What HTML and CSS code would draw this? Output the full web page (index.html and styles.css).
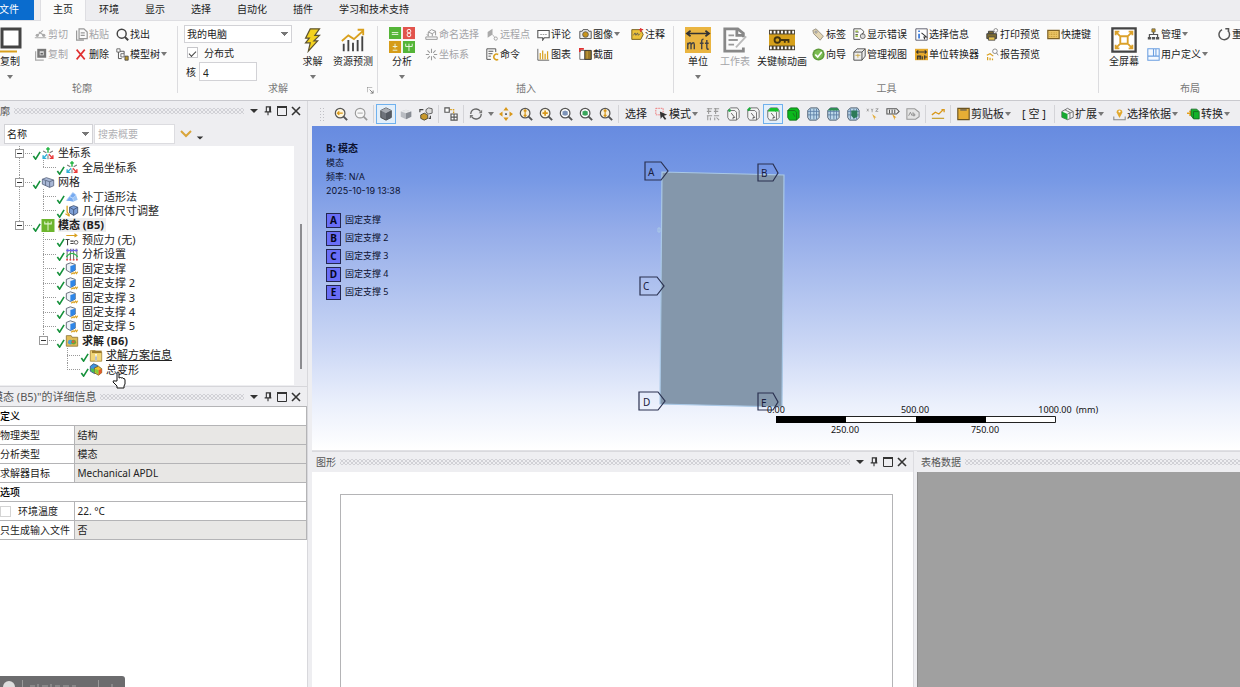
FILE: index.html
```html
<!DOCTYPE html>
<html lang="zh-CN">
<head>
<meta charset="utf-8">
<title>Mechanical</title>
<link rel="stylesheet" href="styles.css">
</head>
<body>
<svg class="sprite" aria-hidden="true">
  <symbol id="caret" viewBox="0 0 6 4"><path d="M0 0h6L3 4z" fill="#777"/></symbol>
  <symbol id="cut" viewBox="0 0 16 16"><path d="M1 12h14M4 9l7-6M6 5l6 4" stroke="#aaa" stroke-width="1.4" fill="none"/><circle cx="4" cy="9" r="2" fill="#aaa"/><circle cx="12" cy="9" r="2" fill="#aaa"/></symbol>
  <symbol id="paste" viewBox="0 0 16 16"><path d="M2 3v12h9M5 1h6l4 4v8H5zM7 6h5M7 9h5" stroke="#999" stroke-width="1.5" fill="none"/></symbol>
  <symbol id="find" viewBox="0 0 16 16"><circle cx="7" cy="7" r="5.500" stroke="#444" stroke-width="1.8" fill="none"/><path d="M11 11l4 4" stroke="#444" stroke-width="2.4"/></symbol>
  <symbol id="dup" viewBox="0 0 16 16"><path d="M2 4v11h10" stroke="#aaa" stroke-width="1.5" fill="none"/><path d="M4 1h11v11H4z" fill="#777"/><path d="M7 4h5v5H7z" fill="#ddd"/><path d="M8 6h3v2H8z" fill="#666"/></symbol>
  <symbol id="del" viewBox="0 0 16 16"><path d="M2 2l10 12M12 2L2 14" stroke="#e03131" stroke-width="2" fill="none"/></symbol>
  <symbol id="mtree" viewBox="0 0 16 16"><path d="M3 5v8h4M3 4h7v3" stroke="#555" stroke-width="1.2" fill="none"/><path d="M1 1h4v4H1zM6 7h4v4H6z" fill="#fff" stroke="#555"/><path d="M11 10h4v5h-4z" fill="#b8962e" stroke="#444"/></symbol>
  <symbol id="bigcopy" viewBox="0 0 22 26"><path d="M2 2h18v18H2z" fill="#fff" stroke="#444" stroke-width="3"/><path d="M0 24.500h17" stroke="#d9a01e" stroke-width="2"/></symbol>
  <symbol id="bolt" viewBox="0 0 20 28"><path d="M7 2h10l-5 7h5l-6 6h4L5 26l2-9H2l4-5H2z" fill="#f4d21f" stroke="#5c5330" stroke-width="1.300"/></symbol>
  <symbol id="forecast" viewBox="0 0 28 28"><path d="M4 26V18M9 26V14M14 26v-9M19 26V14M24 26V10" stroke="#444" stroke-width="2"/><path d="M2 15l7-6 6 4L25 4M19 3h6v6" stroke="#d9a01e" stroke-width="2" fill="none"/></symbol>
  <symbol id="analysis" viewBox="0 0 28 28"><path d="M0 0h13v13H0zM15 15h13v13H15z" fill="#55b538"/><path d="M15 0h13v13H15z" fill="#e2544d"/><path d="M0 15h13v13H0z" fill="#d69c19"/><path d="M3 6h7M3 8h7M4 21h5M6.500 18v5M4 25h5M18 18v3h7v-3M21.500 18v8" stroke="#eef8e6" fill="none"/><circle cx="21.500" cy="4.500" r="2" fill="none" stroke="#fff"/><circle cx="21.500" cy="8.500" r="2" fill="none" stroke="#fff"/></symbol>
  <symbol id="named" viewBox="0 0 16 16"><path d="M1 11h14v3H1zM4 9V5l4-3 5 2v5M4 5l5 2v3M9 7l4-3M2 8l3 2" stroke="#999" stroke-width="1.200" fill="none"/></symbol>
  <symbol id="remote" viewBox="0 0 16 16"><path d="M2 5l6-4v7l-6 4z" fill="#aaa"/><path d="M8 8l3 4" stroke="#aaa"/><circle cx="12" cy="13" r="2" fill="none" stroke="#999"/></symbol>
  <symbol id="csysg" viewBox="0 0 16 16"><path d="M8 1v5M8 10v5M1 8h4M11 8h4M3 3l3 3M13 3l-3 3M3 13l3-3M13 13l-3-3" stroke="#999" stroke-width="1.300"/></symbol>
  <symbol id="cmd" viewBox="0 0 16 16"><path d="M12 5V1H1v13h5M3 4h6M3 7h5M3 10h3" stroke="#555" stroke-width="1.200" fill="none"/><path d="M15 8a3.500 3.500 0 1 0 0 6" stroke="#d9a01e" stroke-width="2" fill="none"/></symbol>
  <symbol id="comment" viewBox="0 0 16 16"><path d="M1 3h14v9H9l-2 3v-3H1z" fill="#fff" stroke="#555" stroke-width="1.300"/><path d="M4 8h8" stroke="#888" stroke-dasharray="2 1"/></symbol>
  <symbol id="chart" viewBox="0 0 16 16"><path d="M1 1v14h14" stroke="#666" stroke-width="1.200" fill="none"/><path d="M4 14V6M7 14V3M10 14V7M13 14V4" stroke="#d9a01e" stroke-width="1.500"/></symbol>
  <symbol id="camera" viewBox="0 0 16 16"><path d="M1 4h3l1-2h6l1 2h3v9H1z" fill="#eee" stroke="#555" stroke-width="1.200"/><circle cx="8" cy="8" r="3.500" fill="#c8941c" stroke="#555"/></symbol>
  <symbol id="section" viewBox="0 0 16 16"><path d="M1 3h14v11H1z" fill="#fff" stroke="#555"/><path d="M7 3h8v11H7z" fill="#9a7826" stroke="#333"/><path d="M10 4v9" stroke="#d9b04c"/><path d="M1 5V1h5" stroke="#e03131" stroke-width="2" fill="none"/></symbol>
  <symbol id="note" viewBox="0 0 16 16"><path d="M1 2h11l3 6-3 6H1z" fill="#ecc23a" stroke="#7a6420" stroke-width="1.200"/><path d="M3 9l2-3 1 3 2-3 1 3 2-2" stroke="#555" fill="none"/><path d="M12 0v5M10 2h5" stroke="#e03131" stroke-width="1.500"/></symbol>
  <symbol id="units" viewBox="0 0 28 28"><path d="M0 0h28v28H0z" fill="#eab541"/><path d="M3 7h22M6 4L2 7l4 3M22 4l4 3-4 3" stroke="#333" stroke-width="1.800" fill="none"/><path d="M3 24v-7M3 19q3-4 3.500 0v5M6.500 19q3-4 3.500 0v5M18 24v-9q0-2 2-2M16 17.500h4M23.500 14v8q0 2 2 2M21.500 17.500h4" stroke="#444" stroke-width="1.500" fill="none"/></symbol>
  <symbol id="sheet" viewBox="0 0 28 28"><path d="M23 11V7l-6-5H3v24h20v-4M16 2v7h7" stroke="#888" stroke-width="3" fill="none"/><path d="M7 9h6M7 14h10M7 19h6" stroke="#999" stroke-width="2"/><path d="M26 10L15 22" stroke="#bbb" stroke-width="2"/></symbol>
  <symbol id="film" viewBox="0 0 28 22"><path d="M0 0h28v22H0z" fill="#4a4130"/><path d="M1 2.500h26M1 19.500h26" stroke="#fff" stroke-width="3" stroke-dasharray="2 2"/><path d="M0 5h28v12H0z" fill="#d6a01a"/><circle cx="9" cy="11" r="3" fill="none" stroke="#443510" stroke-width="2"/><path d="M12 11h10M17 11v3M21 11v3" stroke="#443510" stroke-width="2"/></symbol>
  <symbol id="tag" viewBox="0 0 16 16"><path d="M1 3l4-2 9 9-4 5-8-8z" fill="#e4d6b4" stroke="#8a8478"/><circle cx="5" cy="5" r="1.300" fill="#fff" stroke="#777"/></symbol>
  <symbol id="ok" viewBox="0 0 16 16"><circle cx="8" cy="8" r="7.500" fill="#5f9b3c"/><circle cx="8" cy="8" r="5.500" fill="#7cbd51"/><path d="M4 8l3 3 5-6" stroke="#fff" stroke-width="2" fill="none"/></symbol>
  <symbol id="err" viewBox="0 0 16 16"><path d="M9 14H1V1h9l3 3v2M3 5h4M3 8h3" stroke="#555" stroke-width="1.200" fill="none"/><path d="M3 4h3M3 10h3" stroke="#9b4" stroke-width="2"/><circle cx="12" cy="10" r="3" fill="#ddd" stroke="#555"/><path d="M12 6v2" stroke="#333"/></symbol>
  <symbol id="mview" viewBox="0 0 16 16"><path d="M1 5l4-4h10v9l-4 5H1zM1 5h10v10M11 5l4-4" fill="#eee" stroke="#555" stroke-width="1.200"/><path d="M3 9h6M6 7v5" stroke="#c9a43a"/></symbol>
  <symbol id="info" viewBox="0 0 16 16"><path d="M1 1h14v14H1z" fill="#fff" stroke="#445"/><path d="M5 7v6M5 3v2" stroke="#2b6fd8" stroke-width="2"/><path d="M8 6l6 5h-3l1 3" stroke="#333" stroke-width="1.300" fill="none"/></symbol>
  <symbol id="conv" viewBox="0 0 16 16"><path d="M0 1h16v14H0z" fill="#e5a92c"/><path d="M2 5h12M4 3L2 5l2 2M12 3l2 2-2 2M3 14v-4h4v4M5 10v4M9 14v-4M12 14V9M11 11h4" stroke="#333" stroke-width="1.300" fill="none"/></symbol>
  <symbol id="print" viewBox="0 0 16 16"><path d="M3 7V4h6v3M1 7h12v6H1z" fill="#7a6a33" stroke="#444" stroke-width="1.200"/><path d="M3 11h8v4H3z" fill="#e8c34e" stroke="#444"/><circle cx="12" cy="3" r="2.300" fill="#fff" stroke="#777"/></symbol>
  <symbol id="report" viewBox="0 0 16 16"><path d="M1 9l4-2 4 3M2 15v-4M5 15v-3M8 15v-2" stroke="#d9a01e" stroke-width="1.500" fill="none"/><circle cx="11" cy="4" r="2.800" fill="#fff" stroke="#777"/><path d="M13 6l2 3" stroke="#777"/></symbol>
  <symbol id="keys" viewBox="0 0 16 16"><path d="M1 3h14v10H1z" fill="#ecc666" stroke="#7c6126" stroke-width="1.500"/><path d="M3 6h10M3 8h10M3 10.500h10" stroke="#b98f2b" stroke-dasharray="1 1"/></symbol>
  <symbol id="full" viewBox="0 0 28 28"><path d="M1.500 1.500h25v25h-25z" fill="#fff" stroke="#444" stroke-width="2.500"/><path d="M10 10h8v8h-8zM10 10L6 6M18 10l4-4M10 18l-4 4M18 18l4 4M5 9V5h4M19 5h4v4M5 19v4h4M19 23h4v-4" stroke="#dba12a" stroke-width="2" fill="none"/></symbol>
  <symbol id="org" viewBox="0 0 16 16"><path d="M8 5v3M3 11V8h10v3" stroke="#555" stroke-width="1.500" fill="none"/><path d="M6 1h4v4H6z" fill="#c8941c" stroke="#665"/><path d="M1 11h4v3H1zM6 11h4v3H6zM11 11h4v3h-4z" fill="#555"/></symbol>
  <symbol id="custom" viewBox="0 0 16 16"><path d="M1 1h14v14H1zM8 1v9M1 10h14M11 1v9" stroke="#6b9fe0" stroke-width="1.300" fill="#f4f9ff"/></symbol>
  <symbol id="reset" viewBox="0 0 16 16"><path d="M5 2a6.500 6.500 0 1 0 7 1M9 1h4v4" stroke="#555" stroke-width="1.800" fill="none"/></symbol>
  <symbol id="launch" viewBox="0 0 8 8"><path d="M0 6V0h6M3 3l4 4M7 4v3H4" stroke="#777" fill="none"/></symbol>
  <symbol id="pin" viewBox="0 0 10 12"><path d="M3 1h5v6H3zM1 7h8M5 7v4M7 1v6" stroke="#333" stroke-width="1.300" fill="none"/></symbol>
  <symbol id="max" viewBox="0 0 10 10"><path d="M.5 1h9v8.500h-9z" stroke="#333" fill="none"/><path d="M0 1h10" stroke="#333" stroke-width="2"/></symbol>
  <symbol id="close" viewBox="0 0 10 10"><path d="M1 1l8 8M9 1L1 9" stroke="#333" stroke-width="1.600"/></symbol>
  <symbol id="drop" viewBox="0 0 10 10"><path d="M1 3h8L5 7z" fill="#333"/></symbol>
  <symbol id="check" viewBox="0 0 9 10"><path d="M1 5.500L3.500 9 8.500 1" stroke="#15913a" stroke-width="1.800" fill="none"/></symbol>
  <symbol id="csys" viewBox="0 0 16 16"><path d="M8 1v6M6 3l2-2 2 2" stroke="#2db84b" stroke-width="1.800" fill="none"/><path d="M7 9l-5 5M2 10v4h4" stroke="#2fb0d8" stroke-width="1.700" fill="none"/><path d="M9 9l5 5M14 10v4h-4" stroke="#ea3a3a" stroke-width="1.700" fill="none"/><path d="M2 5l4 2M14 5l-4 2M8 10v5" stroke="#777" stroke-width="1.300"/></symbol>
  <symbol id="mesh" viewBox="0 0 16 16"><path d="M1 4l5-2 9 3v7l-5 2-9-4z" fill="#a9b8d6" stroke="#56627c"/><path d="M1 4l9 3 5-2M10 7v7M5 6v6" stroke="#56627c" fill="none"/></symbol>
  <symbol id="patch" viewBox="0 0 16 16"><path d="M5 8l4-5 4 3 2 6-5 2-9-1z" fill="#9cc4f4"/><path d="M5 8l4-5 4 3-4 4zM1 13l4-5 4 2 1 4" fill="#77aaf0" stroke="#bcd7fa"/></symbol>
  <symbol id="sizing" viewBox="0 0 16 16"><path d="M5 4l5-2 5 2v7l-5 3-5-3z" fill="#7ea0d8" stroke="#3c4d70"/><path d="M5 4l5 3 5-3M10 7v7" stroke="#3c4d70" fill="none"/><path d="M2 2v8l3 4M0 12l5 3" stroke="#d9a01e" stroke-width="1.600" fill="none"/></symbol>
  <symbol id="modal" viewBox="0 0 16 16"><path d="M0 0h16v16H0z" fill="#6cb52d"/><path d="M4 3v3h8V3M8 3v11" stroke="#dff2cc" stroke-width="1.300" fill="none"/></symbol>
  <symbol id="tzero" viewBox="0 0 16 16"><path d="M1 3h13M11 1l3 2-3 2" stroke="#d9a01e" stroke-width="1.300" fill="none"/><path d="M0 8h5M2.500 8v7M6 10h4M6 13h4" stroke="#444" stroke-width="1.300"/><circle cx="13" cy="11.500" r="2.300" stroke="#444" fill="none"/></symbol>
  <symbol id="settings" viewBox="0 0 16 16"><path d="M2 1v14M6 1v14M10 1v14M14 1v14" stroke="#444"/><path d="M1 3h14M3 1v4M8 1v4M13 1v4" stroke="#6d62e8" stroke-width="1.300"/><path d="M1 11q7-9 14 0" stroke="#2db84b" stroke-width="1.500" fill="none"/><path d="M1 14.500h14" stroke="#ea3a3a" stroke-width="2" stroke-dasharray="2 2"/></symbol>
  <symbol id="fixed" viewBox="0 0 16 16"><path d="M1 3l5-2 6 2v7l-6 3-5-3z" fill="#eef2f8" stroke="#4a5260"/><path d="M6 5l6-2v7l-6 3z" fill="#2f86e8"/><path d="M7 15l3-2M10 15l3-3M13 15l2-3" stroke="#d9a01e" stroke-width="1.500"/></symbol>
  <symbol id="solution" viewBox="0 0 16 16"><path d="M1 2h6l1 2h7v11H1z" fill="#e0bb55" stroke="#8d7434"/><circle cx="6" cy="10" r="3" fill="#4c9fd6"/><circle cx="10" cy="10" r="3" fill="#68a83a"/><path d="M8 8h3v3H8z" fill="#d86038"/></symbol>
  <symbol id="solinfo" viewBox="0 0 16 16"><path d="M1 2h6l1 2h7v11H1z" fill="#f1d678" stroke="#a6863a"/><path d="M3 2h12v3H3z" fill="#9c7b2c"/><path d="M8 8v6M8 6v1" stroke="#fff" stroke-width="2.500"/><path d="M8 9v5" stroke="#567"/></symbol>
  <symbol id="deform" viewBox="0 0 16 16"><path d="M1 4l4-3 5 2v8l-4 2-5-3z" fill="#3f92e0" stroke="#34506e"/><path d="M6 6l5-2 4 3v5l-4 3-5-3z" fill="#f0c12c" stroke="#6a5a22"/><path d="M2 6l4 2v4l-4-2z" fill="#46c04b"/><path d="M11 9l4-2v5l-4 3z" fill="#e25a2b"/><path d="M7 7l4 2v5l-4-3z" fill="#88cc3c"/></symbol>
  <symbol id="zback" viewBox="0 0 16 16"><circle cx="7" cy="7" r="5.500" fill="#fff6dc" stroke="#555" stroke-width="1.400"/><path d="M11 11l4 4" stroke="#555" stroke-width="2.300"/><path d="M4 7h6M6 5L4 7l2 2" stroke="#d9981a" stroke-width="1.600" fill="none"/></symbol>
  <symbol id="zfwd" viewBox="0 0 16 16"><circle cx="7" cy="7" r="5.500" fill="#f7f7f7" stroke="#999" stroke-width="1.300"/><path d="M11 11l4 4" stroke="#999" stroke-width="1.800"/><path d="M4 7h6" stroke="#bbb" stroke-width="1.500"/></symbol>
  <symbol id="zbox" viewBox="0 0 16 16"><circle cx="7" cy="7" r="5.500" fill="#f8f1de" stroke="#555" stroke-width="1.400"/><path d="M11 11l4 4" stroke="#555" stroke-width="2.300"/><path d="M7 3v8M5.500 5L7 3l1.500 2M5.500 9L7 11l1.500-2" stroke="#d9981a" stroke-width="1.300" fill="none"/></symbol>
  <symbol id="zplus" viewBox="0 0 16 16"><circle cx="7" cy="7" r="5.500" fill="#fff6dc" stroke="#555" stroke-width="1.400"/><path d="M11 11l4 4" stroke="#555" stroke-width="2.300"/><path d="M7 4v6M4 7h6" stroke="#d9981a" stroke-width="2"/></symbol>
  <symbol id="zfit" viewBox="0 0 16 16"><circle cx="7" cy="7" r="5.500" fill="#fff" stroke="#555" stroke-width="1.400"/><path d="M11 11l4 4" stroke="#555" stroke-width="2.300"/><path d="M4 5l3-1 3 1v4l-3 1-3-1z" fill="#7d93b8"/></symbol>
  <symbol id="zsel" viewBox="0 0 16 16"><circle cx="7" cy="7" r="5.500" fill="#fff" stroke="#555" stroke-width="1.400"/><path d="M11 11l4 4" stroke="#555" stroke-width="2.300"/><path d="M4 5l3-1 3 1v4l-3 1-3-1z" fill="#3aa65c"/></symbol>
  <symbol id="cubed" viewBox="0 0 16 16"><path d="M2 4l6-3 6 3v8l-6 3-6-3z" fill="#6e737b" stroke="#444"/><path d="M2 4l6 3 6-3-6-3z" fill="#a9adb4"/><path d="M8 7l6-3v8l-6 3z" fill="#555a62"/></symbol>
  <symbol id="cubel" viewBox="0 0 16 16"><path d="M2 5l6-2 6 2v6l-6 3-6-3z" fill="#b9bcc2"/><path d="M2 5l6 2 6-2-6-2z" fill="#e6e7ea"/><path d="M8 7l6-2v6l-6 3z" fill="#888c93"/></symbol>
  <symbol id="explode" viewBox="0 0 16 16"><path d="M2 9l4-2 4 2v4l-4 2-4-2z" fill="#c8982c" stroke="#443"/><path d="M8 3l3-2 4 1v5l-4 1-3-2z" fill="#ddd" stroke="#555"/><path d="M1 6V3h4M13 10v3h-2" stroke="#444" stroke-width="1.300" fill="none"/></symbol>
  <symbol id="views" viewBox="0 0 16 16"><path d="M1 1h5v5H1zM8 8h7v7H8zM11.500 8v7M8 11.500h7" stroke="#555" stroke-width="1.300" fill="#fff"/><path d="M7 3h4v4" stroke="#d9a01e" stroke-width="1.500" stroke-dasharray="2 1" fill="none"/></symbol>
  <symbol id="rotate" viewBox="0 0 16 16"><path d="M2 8a6 6 0 0 1 11-3M14 8a6 6 0 0 1-11 3" stroke="#666" stroke-width="1.500" fill="none"/><path d="M15 3v4h-4zM1 13V9h4z" fill="#777"/></symbol>
  <symbol id="pan" viewBox="0 0 16 16"><path d="M8 0l3 4H5zM8 16l3-4H5zM0 8l4-3v6zM16 8l-4-3v6z" fill="#d9981a"/><path d="M7 7h2v2H7z" fill="#555"/></symbol>
  <symbol id="mode" viewBox="0 0 16 16"><path d="M1 1h9v8H1z" fill="none" stroke="#e66" stroke-dasharray="2 1"/><path d="M6 5l9 4-4 1 3 4-2 1-3-4-2 3z" fill="#333"/></symbol>
  <symbol id="sortsel" viewBox="0 0 16 16"><path d="M1 2h6M9 2h6M1 5h5M9 5h5M3 1v7M11 1v7M1 10h6M9 10h6M2 10v5M5 12v3M10 12v3M12 12l3 3" stroke="#999" stroke-width="1.200"/></symbol>
  <symbol id="sbox" viewBox="0 0 16 16"><path d="M2 4l3-3h8l2 3v8l-3 3H4l-2-3z" fill="#f4f4f4" stroke="#666"/><path d="M2 4h8l2 2v9" fill="none" stroke="#666"/><path d="M6 7l4 5-2 0v2" stroke="#555" fill="none"/></symbol>
  <symbol id="svert" viewBox="0 0 16 16"><use href="#sbox"/><circle cx="4" cy="4" r="1.600" fill="#2faa52"/></symbol>
  <symbol id="sedge" viewBox="0 0 16 16"><use href="#sbox"/><path d="M2 4l3-3" stroke="#1cab3a" stroke-width="2.500"/></symbol>
  <symbol id="sface" viewBox="0 0 16 16"><use href="#sbox"/><path d="M2 5l3-4h8l2 4z" fill="#16c22c"/></symbol>
  <symbol id="sbody" viewBox="0 0 16 16"><path d="M2 4l3-3h8l2 3v8l-3 3H4l-2-3z" fill="#0cb81c" stroke="#16701d"/><path d="M2 4h8l2 2v9M8 7l2 4" stroke="#16701d" fill="none"/></symbol>
  <symbol id="snode" viewBox="0 0 16 16"><path d="M2 4l3-3h8l2 3v8l-3 3H4l-2-3z" fill="#bcd7ea" stroke="#456"/><path d="M2 5h13M2 9h13M5 2v12M9 2v12M12 2v12" stroke="#5d7fa6"/></symbol>
  <symbol id="selface" viewBox="0 0 16 16"><use href="#snode"/><path d="M2 4l3-3h8l2 3z" fill="#2f8e54"/></symbol>
  <symbol id="selem" viewBox="0 0 16 16"><use href="#snode"/><path d="M6 4h7v7l-4 2-3-3z" fill="#2c7a58"/></symbol>
  <symbol id="xyz" viewBox="0 0 16 16"><path d="M1 2l2 3M3 2L1 5M6 2l1 2 1-2M7 4v2M11 2h3l-3 3h3" stroke="#999" fill="none"/><path d="M7 8l5 4-2 0v3z" fill="#e3ac38"/></symbol>
  <symbol id="tagsel" viewBox="0 0 16 16"><path d="M1 2h11l3 3-3 3H1zM4 3v4M7 3v4M10 3v4" stroke="#555" stroke-width="1.200" fill="#eee"/><path d="M7 8l5 4-2 0v3z" fill="#e3a01e"/></symbol>
  <symbol id="abc" viewBox="0 0 16 16"><path d="M1 2h9l5 4v5l-4 3H1z" stroke="#999" stroke-width="1.200" fill="#e4e4e4"/><path d="M3 10l2-4 2 4M8 6v4h2V8H8" stroke="#888" fill="none"/></symbol>
  <symbol id="trend" viewBox="0 0 16 16"><path d="M1 9l4-3 4 2 5-5M12 3h3v3" stroke="#d9981a" stroke-width="1.500" fill="none"/><path d="M1 13h14" stroke="#c9a43a" stroke-width="1.500"/></symbol>
  <symbol id="clip" viewBox="0 0 16 16"><path d="M1 1h14v14H1z" fill="#e6ae35" stroke="#6b5320" stroke-width="1.400"/><path d="M4 3h8" stroke="#555" stroke-width="1.500"/></symbol>
  <symbol id="extend" viewBox="0 0 16 16"><path d="M1 5l7-4 7 4v7l-7 3-7-3z" fill="#f4f4f4" stroke="#555"/><path d="M1 5l7 3v7l-7-3z" fill="#17a832"/><path d="M8 8l7-3M5 3l6 3v7" stroke="#666" fill="none"/></symbol>
  <symbol id="place" viewBox="0 0 16 16"><path d="M1 11v4h14v-4" stroke="#888" stroke-width="1.300" fill="none"/><path d="M8 13L4.500 6a3.500 3.500 0 1 1 7 0z" fill="#e2a82c"/><circle cx="8" cy="5" r="1.300" fill="#fff"/></symbol>
  <symbol id="transform" viewBox="0 0 16 16"><path d="M0 7h5M3 4l3 3-3 3" stroke="#e3a01e" stroke-width="2" fill="none"/><path d="M5 2h7l3 3v9H8l-3-4z" fill="#12b32a" stroke="#15651f"/><path d="M8 5h6M8 5v8" stroke="#15651f"/></symbol>
</svg>

<div class="app">
  <nav class="tabs">
    <button class="tab file">文件</button>
    <button class="tab active">主页</button>
    <button class="tab">环境</button>
    <button class="tab">显示</button>
    <button class="tab">选择</button>
    <button class="tab">自动化</button>
    <button class="tab">插件</button>
    <button class="tab">学习和技术支持</button>
  </nav>

  <div class="ribbon">
    <section class="group g-outline">
      <div class="tools">
        <button class="big b-copy"><svg><use href="#bigcopy"/></svg>复制<svg class="caret"><use href="#caret"/></svg></button>
        <div class="small-grid">
          <button class="sm off"><svg><use href="#cut"/></svg>剪切</button>
          <button class="sm off"><svg><use href="#paste"/></svg>粘贴</button>
          <button class="sm"><svg><use href="#find"/></svg>找出</button>
          <button class="sm off"><svg><use href="#dup"/></svg>复制</button>
          <button class="sm"><svg><use href="#del"/></svg>删除</button>
          <button class="sm"><svg><use href="#mtree"/></svg>模型树<svg class="caret"><use href="#caret"/></svg></button>
        </div>
      </div>
      <h2>轮廓</h2>
    </section>

    <section class="group g-solve">
      <div class="tools">
        <div class="solve-form">
          <select class="combo" aria-label="求解位置"><option>我的电脑</option></select>
          <label class="tick"><input type="checkbox" checked>分布式</label>
          <label class="cores">核<input type="text" value="4"></label>
        </div>
        <button class="big b-solve"><svg><use href="#bolt"/></svg>求解<svg class="caret"><use href="#caret"/></svg></button>
        <button class="big b-forecast"><svg><use href="#forecast"/></svg>资源预测</button>
      </div>
      <h2>求解</h2>
      <button class="launcher" aria-label="求解选项"><svg><use href="#launch"/></svg></button>
    </section>

    <section class="group g-insert">
      <div class="tools">
        <button class="big b-analysis"><svg><use href="#analysis"/></svg>分析<svg class="caret"><use href="#caret"/></svg></button>
        <div class="small-grid">
          <button class="sm off"><svg><use href="#named"/></svg>命名选择</button>
          <button class="sm off"><svg><use href="#remote"/></svg>远程点</button>
          <button class="sm"><svg><use href="#comment"/></svg>评论</button>
          <button class="sm"><svg><use href="#camera"/></svg>图像<svg class="caret"><use href="#caret"/></svg></button>
          <button class="sm"><svg><use href="#note"/></svg>注释</button>
          <button class="sm off"><svg><use href="#csysg"/></svg>坐标系</button>
          <button class="sm"><svg><use href="#cmd"/></svg>命令</button>
          <button class="sm"><svg><use href="#chart"/></svg>图表</button>
          <button class="sm"><svg><use href="#section"/></svg>截面</button>
        </div>
      </div>
      <h2>插入</h2>
    </section>

    <section class="group g-tools">
      <div class="tools">
        <button class="big b-units"><svg><use href="#units"/></svg>单位<svg class="caret"><use href="#caret"/></svg></button>
        <button class="big b-sheet off"><svg><use href="#sheet"/></svg>工作表</button>
        <button class="big b-film"><svg><use href="#film"/></svg>关键帧动画</button>
        <div class="small-grid">
          <button class="sm"><svg><use href="#tag"/></svg>标签</button>
          <button class="sm"><svg><use href="#err"/></svg>显示错误</button>
          <button class="sm"><svg><use href="#info"/></svg>选择信息</button>
          <button class="sm"><svg><use href="#print"/></svg>打印预览</button>
          <button class="sm"><svg><use href="#keys"/></svg>快捷键</button>
          <button class="sm"><svg><use href="#ok"/></svg>向导</button>
          <button class="sm"><svg><use href="#mview"/></svg>管理视图</button>
          <button class="sm"><svg><use href="#conv"/></svg>单位转换器</button>
          <button class="sm"><svg><use href="#report"/></svg>报告预览</button>
        </div>
      </div>
      <h2>工具</h2>
    </section>

    <section class="group g-layout">
      <div class="tools">
        <button class="big b-full"><svg><use href="#full"/></svg>全屏幕</button>
        <div class="small-grid">
          <button class="sm"><svg><use href="#org"/></svg>管理<svg class="caret"><use href="#caret"/></svg></button>
          <button class="sm"><svg><use href="#reset"/></svg>重</button>
          <button class="sm"><svg><use href="#custom"/></svg>用户定义<svg class="caret"><use href="#caret"/></svg></button>
        </div>
      </div>
      <h2>布局</h2>
    </section>
  </div>

  <main class="workspace">
    <aside class="side">
      <section class="panel outline">
        <header class="bar"><h3>廓</h3><i class="grip"></i>
          <button aria-label="菜单"><svg><use href="#drop"/></svg></button><button aria-label="固定"><svg><use href="#pin"/></svg></button><button aria-label="最大化"><svg><use href="#max"/></svg></button><button aria-label="关闭"><svg><use href="#close"/></svg></button>
        </header>
        <div class="filter">
          <select class="combo" aria-label="筛选"><option>名称</option></select>
          <input type="text" placeholder="搜索概要" aria-label="搜索概要">
          <button aria-label="展开"><svg viewBox="0 0 12 8"><path d="M1 1l5 5 5-5" stroke="#d9a53a" stroke-width="2" fill="none"/></svg></button>
          <button class="more" aria-label="更多"><svg><use href="#drop"/></svg></button>
        </div>
        <div class="tree-area">
          <ul class="tree">
            <li><i class="cell v t"><button class="exp" aria-label="折叠"></button></i><svg class="ck"><use href="#check"/></svg><svg><use href="#csys"/></svg><span>坐标系</span></li>
            <li><i class="cell v"></i><i class="cell l"></i><svg class="ck"><use href="#check"/></svg><svg><use href="#csys"/></svg><span>全局坐标系</span></li>
            <li><i class="cell v t"><button class="exp" aria-label="折叠"></button></i><svg class="ck"><use href="#check"/></svg><svg><use href="#mesh"/></svg><span>网格</span></li>
            <li><i class="cell v"></i><i class="cell v t"></i><svg class="ck"><use href="#check"/></svg><svg><use href="#patch"/></svg><span>补丁适形法</span></li>
            <li><i class="cell v"></i><i class="cell l"></i><svg class="ck"><use href="#check"/></svg><svg><use href="#sizing"/></svg><span>几何体尺寸调整</span></li>
            <li><i class="cell l"><button class="exp" aria-label="折叠"></button></i><svg class="ck"><use href="#check"/></svg><svg><use href="#modal"/></svg><span class="strong sel">模态 (B5)</span></li>
            <li><i class="cell"></i><i class="cell v t"></i><svg class="ck"><use href="#check"/></svg><svg><use href="#tzero"/></svg><span>预应力 (无)</span></li>
            <li><i class="cell"></i><i class="cell v t"></i><svg class="ck"><use href="#check"/></svg><svg><use href="#settings"/></svg><span>分析设置</span></li>
            <li><i class="cell"></i><i class="cell v t"></i><svg class="ck"><use href="#check"/></svg><svg><use href="#fixed"/></svg><span>固定支撑</span></li>
            <li><i class="cell"></i><i class="cell v t"></i><svg class="ck"><use href="#check"/></svg><svg><use href="#fixed"/></svg><span>固定支撑 2</span></li>
            <li><i class="cell"></i><i class="cell v t"></i><svg class="ck"><use href="#check"/></svg><svg><use href="#fixed"/></svg><span>固定支撑 3</span></li>
            <li><i class="cell"></i><i class="cell v t"></i><svg class="ck"><use href="#check"/></svg><svg><use href="#fixed"/></svg><span>固定支撑 4</span></li>
            <li><i class="cell"></i><i class="cell v t"></i><svg class="ck"><use href="#check"/></svg><svg><use href="#fixed"/></svg><span>固定支撑 5</span></li>
            <li><i class="cell"></i><i class="cell l"><button class="exp" aria-label="折叠"></button></i><svg class="ck"><use href="#check"/></svg><svg><use href="#solution"/></svg><span class="strong">求解 (B6)</span></li>
            <li><i class="cell"></i><i class="cell"></i><i class="cell v t"></i><svg class="ck"><use href="#check"/></svg><svg><use href="#solinfo"/></svg><span class="under">求解方案信息</span></li>
            <li class="hover"><i class="cell"></i><i class="cell"></i><i class="cell l"></i><svg class="ck"><use href="#check"/></svg><svg><use href="#deform"/></svg><span>总变形</span>
              <svg class="cursor" viewBox="0 0 15 18"><path d="M5 10V2q0-1 1-1t1 1v5q2-1 2 0 2-1 2 .5 2-.5 2 1.500v4l-1 2v2H5v-2L1 11q0-2 2-1z" fill="#fff" stroke="#111"/></svg></li>
          </ul>
          <div class="scroll"><i></i></div>
        </div>
      </section>

      <section class="panel details">
        <header class="bar"><h3 class="cropped">模态 (B5)"的详细信息</h3><i class="grip"></i>
          <button aria-label="菜单"><svg><use href="#drop"/></svg></button><button aria-label="固定"><svg><use href="#pin"/></svg></button><button aria-label="最大化"><svg><use href="#max"/></svg></button><button aria-label="关闭"><svg><use href="#close"/></svg></button>
        </header>
        <table class="props">
          <colgroup><col class="c-name"><col></colgroup>
          <tbody>
            <tr><th colspan="2" class="sect">定义</th></tr>
            <tr><th>物理类型</th><td>结构</td></tr>
            <tr><th>分析类型</th><td>模态</td></tr>
            <tr><th>求解器目标</th><td>Mechanical APDL</td></tr>
            <tr><th colspan="2" class="sect">选项</th></tr>
            <tr><th><label class="env"><input type="checkbox">环境温度</label></th><td class="edit">22. °C</td></tr>
            <tr><th>只生成输入文件</th><td>否</td></tr>
          </tbody>
        </table>
      </section>
    </aside>

    <div class="main">
      <div class="gbar">
        <i class="vgrip"></i>
        <button><svg><use href="#zback"/></svg></button><button><svg><use href="#zfwd"/></svg></button><i class="sep"></i>
        <button class="on"><svg><use href="#cubed"/></svg></button><button><svg><use href="#cubel"/></svg></button><button><svg><use href="#explode"/></svg></button><i class="sep"></i>
        <button><svg><use href="#views"/></svg></button><i class="sep"></i>
        <button><svg><use href="#rotate"/></svg></button><button class="thin"><svg class="caret"><use href="#caret"/></svg></button>
        <button><svg><use href="#pan"/></svg></button><button><svg><use href="#zbox"/></svg></button><button><svg><use href="#zplus"/></svg></button><button><svg><use href="#zfit"/></svg></button><button><svg><use href="#zsel"/></svg></button><button><svg><use href="#zbox"/></svg></button><i class="sep"></i>
        <span class="cap">选择</span>
        <button class="txt"><svg><use href="#mode"/></svg>模式<svg class="caret"><use href="#caret"/></svg></button>
        <button><svg><use href="#sortsel"/></svg></button><button><svg><use href="#svert"/></svg></button><button><svg><use href="#sedge"/></svg></button><button class="on"><svg><use href="#sface"/></svg></button><button><svg><use href="#sbody"/></svg></button><button><svg><use href="#snode"/></svg></button><button><svg><use href="#selface"/></svg></button><button><svg><use href="#selem"/></svg></button><button><svg><use href="#xyz"/></svg></button><button><svg><use href="#tagsel"/></svg></button><button><svg><use href="#abc"/></svg></button><i class="sep"></i>
        <button><svg><use href="#trend"/></svg></button><i class="sep"></i>
        <button class="txt"><svg><use href="#clip"/></svg>剪贴板<svg class="caret"><use href="#caret"/></svg></button>
        <span class="cap wide">[ 空 ]</span><i class="sep"></i>
        <button class="txt"><svg><use href="#extend"/></svg>扩展<svg class="caret"><use href="#caret"/></svg></button>
        <button class="txt"><svg><use href="#place"/></svg>选择依据<svg class="caret"><use href="#caret"/></svg></button>
        <button class="txt"><svg><use href="#transform"/></svg>转换<svg class="caret"><use href="#caret"/></svg></button>
      </div>

      <section class="view">
        <svg class="scene">
          <path d="M350 46L472 49 470 281 348 278z" fill="#8497ab" stroke="#a9c8e6" stroke-width="1.200"/>
          <path d="M346 102h2v4h-2z" fill="none" stroke="#a9c8e6"/>
          <g fill="none" stroke="#2a3150" stroke-width="1.200">
            <path d="M333 36h16l7 9-7 9h-16z"/><path d="M446 38h15l5 9-5 8h-15z"/><path d="M328 151h17l7 9-7 9h-17z"/><path d="M327 266h19l7 9-7 9h-19z"/><path d="M446 267h15l5 9-5 8h-15z"/>
          </g>
          <g class="flag"><text x="336" y="50">A</text><text x="449" y="51">B</text><text x="331" y="164">C</text><text x="331" y="280">D</text><text x="449" y="281">E</text></g>
          <path d="M464.500 290.500h279v6h-279z" fill="#fff" stroke="#222"/><path d="M464 290h70v7h-70zM604 290h70v7h-70z"/>
          <g class="ticks"><text x="464" y="287">0.00</text><text x="603" y="287">500.00</text><text x="743" y="287">1000.00</text><text x="775" y="287">(mm)</text><text x="533" y="307">250.00</text><text x="673" y="307">750.00</text></g>
        </svg>
        <div class="notes">
          <strong>B: 模态</strong>
          <span>模态</span>
          <span>频率: N/A</span>
          <span class="date">2025-10-19 13:38</span>
        </div>
        <ul class="legend">
          <li><b>A</b>固定支撑</li>
          <li><b>B</b>固定支撑 2</li>
          <li><b>C</b>固定支撑 3</li>
          <li><b>D</b>固定支撑 4</li>
          <li><b>E</b>固定支撑 5</li>
        </ul>
      </section>

      <div class="bottom">
        <section class="panel graph">
          <header class="bar"><h3>图形</h3><i class="grip"></i>
            <button aria-label="菜单"><svg><use href="#drop"/></svg></button><button aria-label="固定"><svg><use href="#pin"/></svg></button><button aria-label="最大化"><svg><use href="#max"/></svg></button><button aria-label="关闭"><svg><use href="#close"/></svg></button>
          </header>
          <div class="plot"><div class="frame"></div></div>
        </section>
        <section class="panel data">
          <header class="bar"><h3>表格数据</h3><i class="grip"></i></header>
          <div class="blank"></div>
        </section>
      </div>
    </div>
  </main>
  <div class="dock">
    <svg><circle cx="9" cy="11" r="6" fill="#ddd"/><path d="M22.500 4v8M98.500 4v8" stroke="#999"/><path d="M30 10h5M38 8v3M42 10h6M51 8v3M55 10h5M63 10h6M72 10h4M112 8v3" stroke="#a4a4a4"/></svg>
  </div>
</div>
</body>
</html>
```
FILE: styles.css
```css
* { box-sizing: border-box; }
body {
  margin: 0;
  background: #eeeef1;
  color: #222;
  font: 10px/14px "Noto Sans", "Noto Sans CJK SC", sans-serif;
}
.sprite { position: absolute; width: 0; height: 0; }
h2, h3, ul { margin: 0; padding: 0; font-weight: 400; list-style: none; }
button, input, select { font: inherit; color: inherit; }
button { padding: 0; border: 0; background: none; white-space: nowrap; }
svg { display: block; flex: none; }
.caret { width: 6px; height: 4px; }

.app {
  position: relative;
  display: grid;
  grid-template-columns: minmax(0, 1fr);
  grid-template-rows: auto auto minmax(0, 1fr);
  height: 100vh;
  overflow: hidden;
}

/* tabs */
.tabs { display: flex; height: 21px; background: #ededf0; border-bottom: 1px solid #dedee2; }
.tab { padding: 0 13px 2px; }
.tab.file { margin: 0 6px 0 -16px; padding: 0 15px 3px; background: #0a6cce; color: #fff; }
.tab.active { height: 21px; background: #fbfbfb; border: solid #dedee2; border-width: 0 1px; padding: 0 12px 3px; }

/* ribbon */
.ribbon {
  display: flex;
  height: 80px;
  margin-left: -14px;
  background: #fbfbfb;
  border-bottom: 1px solid #c9c9ce;
}
.group {
  position: relative;
  flex: none;
  display: flex;
  flex-direction: column;
  padding: 3px 0 5px;
}
.group::after {
  content: "";
  position: absolute;
  top: 5px;
  right: 0;
  bottom: 7px;
  border-right: 1px solid #dcdcdf;
}
.group h2 { font-size: 10px; text-align: center; color: #777; }
.tools { display: flex; flex: 1; min-height: 0; }
.g-outline { width: 192px; padding-left: 14px; }
.g-outline h2 { margin-left: -14px; }
.g-solve { width: 200px; }
.g-insert { width: 296px; }
.g-tools { width: 425px; }
.g-layout { width: 182px; }

.big { display: flex; flex-direction: column; align-items: center; padding-top: 3px; }
.big > svg:first-child { width: 26px; height: 26px; margin-bottom: 1px; }
.big .caret { margin-top: 7px; }
.big.off, .sm.off { color: #a4a4a8; }
.b-copy { width: 20px; margin-right: 14px; }
.b-copy > svg:first-child { margin-left: 2px; }
.b-solve { width: 35px; }
.b-forecast { width: 46px; }
.b-analysis { width: 30px; margin: 0 8px 0 9px; }
.b-units { width: 30px; margin-left: 9px; }
.b-sheet { width: 44px; }
.b-film { width: 50px; margin-right: 5px; }
.b-full { width: 34px; margin: 0 6px 0 8px; }

.small-grid { display: grid; grid-auto-rows: 20px; align-content: start; justify-items: start; }
.g-outline .small-grid { grid-template-columns: 41px 41px auto; }
.g-insert .small-grid { grid-template-columns: 61px 51px 42px 52px auto; }
.g-tools .small-grid { grid-template-columns: 41px 62px 71px 61px auto; }
.g-layout .small-grid { grid-template-columns: 71px auto; }
.sm { display: flex; align-items: center; gap: 1px; height: 20px; }
.sm > svg:first-child { width: 13px; height: 13px; }

.combo {
  appearance: none;
  border: 1px solid #d2d2d6;
  border-radius: 0;
  padding: 0 2px;
  background: #fff conic-gradient(from -45deg at 50% 100%, #777 0 90deg, transparent 0) no-repeat right 3px center / 7px 4px;
}
.solve-form { width: 108px; margin: 1px 3px 0 6px; display: flex; flex-direction: column; gap: 1px; }
.solve-form .combo { height: 19px; }
.tick { display: flex; align-items: center; gap: 6px; height: 18px; padding-left: 3px; }
.tick input {
  appearance: none;
  display: grid;
  place-items: center;
  width: 11px;
  height: 11px;
  margin: 0;
  border: 1px solid #c6c6ca;
  background: #fff;
}
.tick input:checked::before {
  content: "";
  width: 6px;
  height: 3px;
  border: solid #444;
  border-width: 0 0 1px 1px;
  rotate: -45deg;
}
.cores { display: flex; align-items: center; gap: 3px; padding-left: 2px; }
.cores input { width: 58px; height: 19px; padding: 2px 3px 0; border: 1px solid #d2d2d6; background: #fff; }
.launcher { position: absolute; right: 4px; bottom: 6px; }
.launcher svg { width: 7px; height: 7px; }

/* workspace */
.workspace { display: grid; grid-template-columns: 308px minmax(0, 1fr); gap: 4px; min-height: 0; }
.side { display: grid; grid-template-rows: 284px minmax(0, 1fr); gap: 1px; border-right: 1px solid #d8d8dc; }
.panel { display: flex; flex-direction: column; min-width: 0; min-height: 0; }
.bar { display: flex; align-items: center; flex: none; height: 20px; padding-right: 4px; }
.bar h3 { font-size: 10px; color: #555; white-space: nowrap; }
.bar .cropped { margin-left: -8px; font-size: 11px; }
.bar button { display: grid; place-items: center; width: 14px; height: 16px; }
.bar svg { width: 10px; height: 10px; }
.grip {
  flex: 1;
  height: 6px;
  margin: 0 3px 0 4px;
  background:
    radial-gradient(circle, #c6c6cb 1px, transparent 1px) 0 0 / 4px 4px,
    radial-gradient(circle, #c6c6cb 1px, transparent 1px) 2px 2px / 4px 4px;
  opacity: .7;
}

.filter { display: flex; align-items: center; height: 25px; padding-left: 4px; }
.filter .combo { width: 89px; height: 20px; }
.filter input { width: 81px; height: 20px; margin: 0 5px 0 1px; padding: 0 3px; border: 1px solid #dcdce0; background: #fff; }
.filter input::placeholder { color: #b0b0b4; }
.filter svg { width: 12px; height: 8px; }
.filter .more { margin: 8px 0 0 4px; }
.filter .more svg { width: 8px; height: 8px; }

.tree-area { display: flex; flex: 1; min-height: 0; }
.tree {
  flex: 1;
  display: grid;
  grid-auto-rows: 1fr;
  padding: 0 0 8px 8px;
  background: #fff;
  font-size: 11px;
}
.tree li { display: flex; align-items: center; min-height: 0; }
.tree svg { width: 14px; height: 13px; }
.tree .ck { width: 9px; height: 9px; margin-top: 5px; }
.tree span { margin-left: 3px; white-space: nowrap; }
.strong { font-weight: 700; }
.sel { background: #efefef; padding-right: 2px; }
.under { text-decoration: underline; }
.cell { display: flex; align-items: center; align-self: stretch; width: 24px; padding-left: 7px; background-repeat: no-repeat; }
.v, .l {
  --dy: repeating-linear-gradient(#999 0 1px, transparent 1px 2px);
  --dx: repeating-linear-gradient(90deg, #999 0 1px, transparent 1px 2px);
  background-image: var(--dy);
  background-position: 11px 0;
  background-size: 1px 100%;
}
.v.t, .l {
  background-image: var(--dy), var(--dx);
  background-position: 11px 0, 11px 50%;
  background-size: 1px 100%, 13px 1px;
}
.l { background-size: 1px 50%, 13px 1px; }
.exp {
  width: 9px;
  height: 9px;
  border: 1px solid #999;
  background: #fff linear-gradient(#333, #333) no-repeat center / 5px 1px;
}
.hover { position: relative; }
.tree .cursor { position: absolute; left: 104px; top: 8px; width: 15px; height: 18px; }
.scroll { width: 13px; padding-top: 78px; display: flex; justify-content: center; }
.scroll i { width: 2px; height: 145px; background: #8c8c90; }

.details { border-top: 1px solid #d6d6da; background: #fff; }
.details .bar { height: 19px; background: #eeeef1; }
.props { width: 100%; border-collapse: collapse; table-layout: fixed; border: solid #b4b4b6; border-width: 1px 1px 0 0; }
.props .c-name { width: 74px; }
.props tr { height: 19px; }
.props th, .props td { padding: 0 0 0 3px; border-bottom: 1px solid #b4b4b6; text-align: left; font-weight: 400; line-height: 14px; white-space: nowrap; }
.props th { padding-left: 0; border-right: 1px solid #b4b4b6; }
.props .sect { font-weight: 500; color: #000; }
.props td { background: #e8e7e5; }
.props .edit { background: #fff; }
.env { display: flex; align-items: center; gap: 7px; }
.env input { appearance: none; width: 11px; height: 11px; margin: 0; border: 1px solid #d4d4d4; }

/* graphics area */
.main { display: grid; grid-template-columns: minmax(0, 1fr); grid-template-rows: 25px minmax(0, 324fr) minmax(0, 237fr); min-width: 0; }
.gbar { display: flex; align-items: center; height: 25px; font-size: 11px; overflow: hidden; }
.gbar > * { flex: none; }
.gbar button { display: flex; align-items: center; justify-content: center; width: 20px; height: 20px; }
.gbar svg { width: 14px; height: 14px; }
.gbar .txt svg { width: 13px; }
.gbar .caret, .gbar .txt .caret { width: 6px; height: 4px; }
.gbar .on { border: 1px solid #6fb1ee; background: #e3effa; }
.gbar .thin { width: 10px; }
.gbar .txt { width: auto; padding: 0 5px 0 4px; gap: 1px; }
.cap { padding: 0 4px; white-space: nowrap; }
.cap.wide { padding: 0 6px; }
.sep { width: 5px; height: 18px; background: linear-gradient(#d4d4d8, #d4d4d8) no-repeat center / 1px 100%; }
.vgrip { width: 6px; height: 14px; margin: 0 6px 0 7px; background: radial-gradient(circle, #c0c0c5 1px, transparent 1px) 0 0 / 3px 3px; }

.view {
  position: relative;
  min-height: 0;
  padding: 14px;
  background: linear-gradient(#678be0, #7698e5 16%, #94ace9 32%, #b1c3ef 51%, #cbd7f5 68%, #ebf0fc 86%, #fff);
  color: #0c1230;
  font-size: 9px;
}
.scene { position: absolute; inset: 0; width: 100%; height: 100%; }
.flag text { font-size: 10px; fill: #1b2140; }
.ticks text { font-size: 9px; fill: #111; text-anchor: middle; }
.notes { position: relative; display: flex; flex-direction: column; }
.notes > * { line-height: 14px; }
.notes strong { font-size: 10px; line-height: 16px; }
.notes .date { font-family: Inter, "Noto Sans", sans-serif; }
.legend { position: relative; margin-top: 13px; }
.legend li { display: flex; align-items: center; gap: 4px; height: 18px; }
.legend b { width: 15px; height: 15px; border: 1px solid #23264e; background: #6a6ef6; font-size: 10px; line-height: 13px; text-align: center; color: #05061c; }

.bottom { display: grid; grid-template-columns: minmax(0, 602fr) minmax(0, 323fr); gap: 3px; border-top: 1px solid #e0e0e4; min-height: 0; }
.bottom .panel { border-top: 1px solid #d9d9dd; }
.bottom .bar { padding-left: 4px; height: 20px; }
.graph { border-right: 1px solid #dcdce0; }
.plot { flex: 1; display: flex; padding: 22px 20px 0 28px; background: #fff; }
.frame { flex: 1; border: solid #b4b4b6; border-width: 1px 1px 0; }
.bottom .data .bar { padding-right: 0; }
.data .grip { margin-right: 0; }
.blank { flex: 1; background: #a0a0a0; border-left: 1px solid #8c8c8c; }

/* docked recorder strip, over the details panel */
.dock { position: absolute; left: 0; bottom: 0; width: 125px; height: 11px; background: #6c6c6e; border-top-right-radius: 3px; overflow: hidden; }
.dock svg { width: 125px; height: 11px; }
```
